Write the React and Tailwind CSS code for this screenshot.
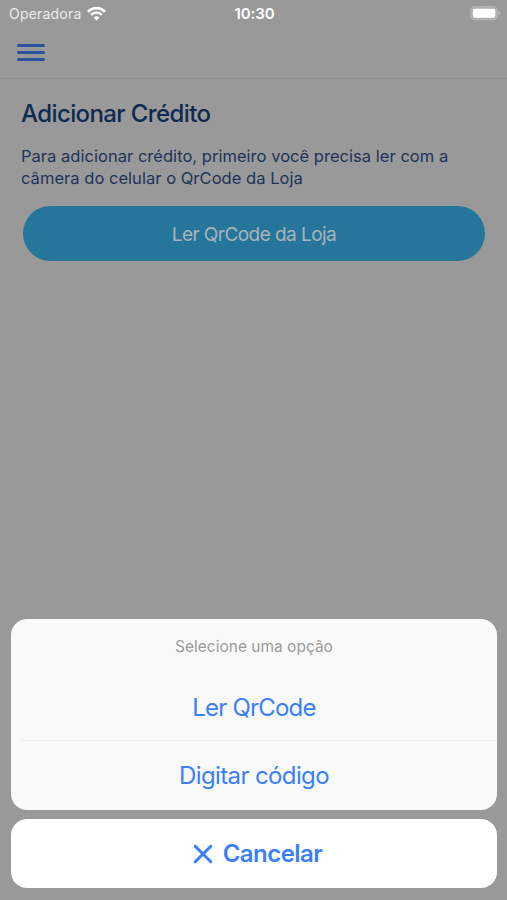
import React from 'react';

const options = ['Ler QrCode', 'Digitar código'];

function WifiIcon() {
    return (
        <svg className="ml-[6px] h-[14px] w-[19px]" viewBox="0 0 19 14" fill="none" stroke="#fff">
            <path d="M1 4.7a12 12 0 0 1 17 0" strokeWidth="2.8" />
            <path d="M4.1 7.8a7.6 7.6 0 0 1 10.8 0" strokeWidth="2.5" />
            <path d="M9.5 13.6 6.6 10.7a4.1 4.1 0 0 1 5.8 0z" fill="#fff" stroke="none" />
        </svg>
    );
}

function BatteryIcon() {
    return (
        <svg className="h-[15px] w-[31px]" viewBox="0 0 31 15">
            <rect x="0.7" y="0.5" width="26.6" height="13.4" rx="4" fill="#b0b0b0" stroke="#b8b8b8" strokeWidth="0.8" />
            <rect x="2.9" y="2.7" width="22.4" height="9" rx="2" fill="#fff" />
            <path d="M28.6 5.2v4.2c.9-.4 1.6-1.1 1.6-2.1s-.7-1.7-1.6-2.1z" fill="#bcbcbc" />
        </svg>
    );
}

function StatusBar() {
    return (
        <div className="grid h-[27px] grid-cols-3 items-center pl-[9px] pr-[6px] text-white">
            <div className="flex items-center">
                <span className="text-[14px] tracking-[0.2px] text-[#ececec]">Operadora</span>
                <WifiIcon />
            </div>
            <span className="pr-px pt-0.5 text-center text-[15px] font-semibold tracking-[-0.1px]">10:30</span>
            <div className="flex justify-end">
                <BatteryIcon />
            </div>
        </div>
    );
}

function ActionSheet() {
    return (
        <div className="mt-auto flex flex-col gap-[9px] pb-3 pl-[11px] pr-[10px] text-[#3b7ff5]">
            <div className="overflow-hidden rounded-2xl bg-[#f9f9f9]">
                <div className="flex h-[54px] items-center justify-center pt-px text-[15.5px] text-[#9c9c9c]">
                    Selecione uma opção
                </div>
                <button className="flex h-[67px] w-full items-center justify-center pt-0.5 text-[24px] tracking-[-0.8px]">
                    {options[0]}
                </button>
                <div className="ml-[9px] h-px bg-[#f0f0f0]" />
                <button className="flex h-[69px] w-full items-center justify-center text-[24px] tracking-[-0.62px]">
                    {options[1]}
                </button>
            </div>
            <button className="flex h-[69px] items-center justify-center rounded-2xl bg-white pl-[7px] text-[24px] font-semibold tracking-[-0.55px]">
                <svg className="mr-[10px] h-[20px] w-[20px]" viewBox="0 0 20 20" stroke="currentColor" strokeWidth="3" strokeLinecap="round">
                    <path d="M2.2 2.2 17.8 17.8M17.8 2.2 2.2 17.8" />
                </svg>
                Cancelar
            </button>
        </div>
    );
}

export default function App() {
    return (
        <div className="flex h-[900px] w-[507px] flex-col overflow-hidden bg-[#999999] font-['Inter',sans-serif]">
            <header className="h-[79px] border-b border-[#8f8f8f]">
                <StatusBar />
                <button className="ml-[17px] mt-[17px] flex w-[28px] flex-col gap-[4.5px]" aria-label="Menu">
                    <span className="h-[2.5px] w-full rounded-full bg-[#2b529d]" />
                    <span className="h-[2.5px] w-full rounded-full bg-[#2b529d]" />
                    <span className="h-[2.5px] w-full rounded-full bg-[#2b529d]" />
                </button>
            </header>
            <main className="px-[21px] pt-5 text-[#0f2a50]">
                <h1 className="text-[24px] font-medium leading-[30px] tracking-[-0.6px]">Adicionar Crédito</h1>
                <p className="mt-4 whitespace-nowrap text-[16.5px] leading-[22px] tracking-[0.03px] text-[#1d3359]">
                    Para adicionar crédito, primeiro você precisa ler com a
                    <br />
                    câmera do celular o QrCode da Loja
                </p>
                <button className="ml-[2px] mt-[17px] flex h-[54.5px] w-[462px] items-center justify-center rounded-full bg-[#26759b] pt-[3px] text-[19px] tracking-[-0.55px] text-[#a9b4ba]">
                    Ler QrCode da Loja
                </button>
            </main>
            <ActionSheet />
        </div>
    );
}
